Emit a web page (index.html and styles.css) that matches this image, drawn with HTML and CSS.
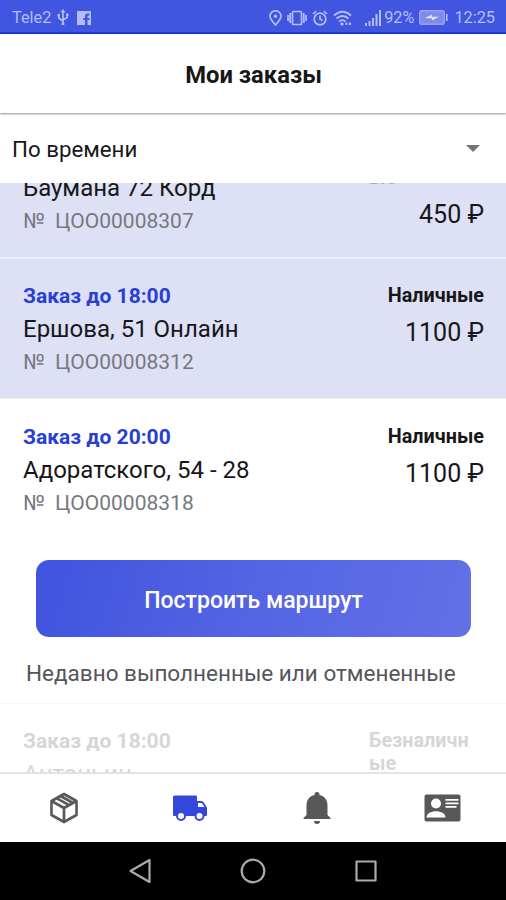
FILE: index.html
```html
<!DOCTYPE html>
<html lang="ru">
  <head>
    <meta charset="UTF-8" />
    <meta name="viewport" content="width=device-width, initial-scale=1.0" />
    <title>Мои заказы</title>
    <link rel="stylesheet" href="styles.css">
  </head>
  <body>
    <div class="status-bar">
      <span class="carrier">Tele2</span>
      <svg class="usb" width="12" height="17" viewBox="0 0 12 17" fill="none" stroke="currentColor" stroke-width="1.6">
        <path d="M6 2v12M1.8 6v3L6 12M10.2 6v2.500L6 11" />
        <path d="M6 0l2.500 3.500h-5zM0.500 5h2.500v2.500H0.500zM9 4.500h2.500V7H9zM4.700 13.500h2.600v2.500H4.700z" fill="currentColor" stroke="none" />
      </svg>
      <svg class="fb" width="14" height="14" viewBox="0 0 14 14">
        <path fill="currentColor" fill-rule="evenodd" d="M0 0h14v14h-3.500V9h2V7h-2V5.500q0-1 1-1h1v-2h-2q-2.500 0-2.500 2.700V7H6.300v2H8v5H0z" />
      </svg>
      <span class="spacer"></span>
      <svg class="pin" width="13" height="16" viewBox="0 0 13 16" fill="none" stroke="currentColor" stroke-width="1.700">
        <path d="M6.500 15C3 11 1 9 1 6.300a5.500 5.500 0 0 1 11 0C12 9 10 11 6.500 15z" />
        <circle cx="6.500" cy="6.300" r="1.700" fill="currentColor" stroke="none" />
      </svg>
      <svg class="vibrate" width="20" height="16" viewBox="0 0 20 16" fill="none" stroke="currentColor" stroke-width="1.700">
        <rect x="5.500" y="1.500" width="9" height="13" rx="1" />
        <path d="M3.200 3v10M1 5v6M16.800 3v10M19 5v6" />
      </svg>
      <svg class="alarm" width="16" height="16" viewBox="0 0 16 16" fill="none" stroke="currentColor" stroke-width="1.700">
        <circle cx="8" cy="9" r="5.800" />
        <path d="M8 5.500V9l2.500 1.500M1 4l3.200-3M15 4l-3.200-3" />
      </svg>
      <svg class="wifi" width="19" height="16" viewBox="0 0 19 16" fill="none" stroke="currentColor" stroke-width="1.800">
        <path d="M1 5.500q8.500-7.500 17 0M3.500 8.500q6-5 12 0M6 11.500q3.500-2.800 6.500 0" />
        <path d="M9 12l2 2-2 2-2-2zM12.500 12.500h2v2.500h-2zM16 12.500h2v2.500h-2z" fill="currentColor" stroke="none" />
      </svg>
      <svg class="signal" width="17" height="16" viewBox="0 0 17 16" fill="currentColor">
        <path d="M0 13h2v3H0zM3.500 11h2v5h-2zM7 8h2v8H7zM10.500 4h2v12h-2zM14 0h2v16h-2z" />
      </svg>
      <span class="percent">92%</span>
      <svg class="battery" width="29" height="15" viewBox="0 0 29 15">
        <rect x="0.700" y="0.700" width="24.600" height="13.600" rx="2" fill="#7f8ceb" stroke="#98a4f1" stroke-width="1.400" />
        <path d="M27 4h1.500v7H27z" fill="#b9c2f8" />
        <path d="M6 8l7-3.500v2.300h7L13 10.500V8.500z" fill="#dde2ff" />
      </svg>
      <span class="clock">12:25</span>
    </div>

    <header class="header">
      <h1>Мои заказы</h1>
    </header>

    <div class="sort">
      <span>По времени</span>
      <span class="caret"></span>
    </div>

    <main class="content">
      <div class="order active">
        <div class="info">
          <div class="time">Заказ до 18:00</div>
          <div class="address">Баумана 72 Корд</div>
          <div class="number">№&nbsp; ЦОО00008307</div>
        </div>
        <div class="payment">
          <div class="method muted">Безналичные</div>
          <div class="price">450 ₽</div>
        </div>
      </div>
      <div class="order active">
        <div class="info">
          <div class="time">Заказ до 18:00</div>
          <div class="address">Ершова, 51 Онлайн</div>
          <div class="number">№&nbsp; ЦОО00008312</div>
        </div>
        <div class="payment">
          <div class="method">Наличные</div>
          <div class="price">1100 ₽</div>
        </div>
      </div>
      <div class="order">
        <div class="info">
          <div class="time">Заказ до 20:00</div>
          <div class="address">Адоратского, 54 - 28</div>
          <div class="number">№&nbsp; ЦОО00008318</div>
        </div>
        <div class="payment">
          <div class="method">Наличные</div>
          <div class="price">1100 ₽</div>
        </div>
      </div>

      <button class="route">Построить маршрут</button>
      <h2 class="recent">Недавно выполненные или отмененные</h2>

      <div class="order done">
        <div class="info">
          <div class="time">Заказ до 18:00</div>
          <div class="address">Антоньин</div>
        </div>
        <div class="payment">
          <div class="method">Безналичные</div>
        </div>
      </div>
    </main>

    <nav class="tabs">
      <a class="tab">
        <svg width="30" height="32" viewBox="0 0 30 32" fill="none" stroke="currentColor" stroke-width="2.600" stroke-linejoin="round">
          <path d="M15 2l12.500 7v14L15 30 2.500 23V9z" />
          <path d="M2.500 9L15 16l12.500-7M15 16v14M7.500 6.200L20 13.200M11.500 4L24 11" />
        </svg>
      </a>
      <a class="tab selected">
        <svg width="36" height="28" viewBox="0 0 36 28">
          <path fill="currentColor" d="M2.500 1.500H24a1 1 0 0 1 1 1V7h4q2 0 3 1.700l2 3.300q1 1 1 2.500V21q0 1-1 1H2q-1 0-1-1V3q0-1.500 1.500-1.500z" />
          <path fill="#fff" d="M26 9h3q1 0 1.600 1l1.900 3H26z" />
          <g fill="#fff" stroke="currentColor" stroke-width="2">
            <circle cx="9" cy="22" r="4" />
            <circle cx="27.500" cy="22" r="4" />
          </g>
        </svg>
      </a>
      <a class="tab">
        <svg width="28" height="34" viewBox="0 0 28 34" fill="currentColor">
          <path d="M14 1a2.500 2.500 0 0 1 2.500 2.500v.500C21.500 5 24.500 9 24.500 14v10l3 3v1H.500v-1l3-3V14c0-5 3-9 8-10v-.500A2.500 2.500 0 0 1 14 1zM11 30h6a3 3 0 0 1-6 0z" />
        </svg>
      </a>
      <a class="tab">
        <svg width="37" height="28" viewBox="0 0 37 28">
          <rect x="0.500" y="0.500" width="36" height="27" rx="2" fill="currentColor" />
          <g fill="#fff">
            <circle cx="12" cy="9.500" r="5" />
            <path d="M2.500 23.500c0-8.500 19-8.500 19 0z" />
            <path d="M21.500 5h13v1.800h-13zM21.500 8.500h13v1.800h-13zM21.500 12h11v1.800h-11z" />
          </g>
        </svg>
      </a>
    </nav>

    <div class="system-nav">
      <svg width="24" height="26" viewBox="0 0 24 26"><path d="M21.500 2v22L2.500 13z" /></svg>
      <svg width="26" height="26" viewBox="0 0 26 26"><circle cx="13" cy="13" r="11.300" /></svg>
      <svg width="24" height="24" viewBox="0 0 24 24"><rect x="2.500" y="2.500" width="19" height="19" /></svg>
    </div>
  </body>
</html>
```

FILE: styles.css
```css
* {
  box-sizing: border-box;
}
body {
  margin: 0;
  height: 900px;
  display: flex;
  flex-direction: column;
  overflow: hidden;
  background: #fff;
  color: #17171a;
  font-family: Roboto, "Noto Sans", sans-serif;
}
svg {
  display: block;
  flex: none;
}

.status-bar {
  display: flex;
  align-items: center;
  flex: none;
  height: 34px;
  padding: 3px 11px 0 12px;
  background: #4056e0;
  border-bottom: 2px solid #1c36d0;
  color: #b3bdf7;
  font-size: 16.3px;
}
.usb {
  margin-left: 6px;
}
.fb {
  margin-left: 8px;
}
.spacer {
  flex: 1;
}
.vibrate {
  margin-left: 5px;
}
.alarm {
  margin-left: 5px;
}
.wifi {
  margin-left: 5px;
}
.signal {
  margin-left: 13px;
}
.percent {
  margin-left: 2px;
}
.battery {
  margin-left: 5px;
}
.clock {
  margin-left: 6px;
}

.header {
  position: relative;
  flex: none;
  height: 79px;
  box-shadow: 0 1px 2px rgba(0, 0, 0, 0.45);
}
.header h1 {
  margin: 0;
  padding: 1px 0 0 1px;
  font-size: 23.8px;
  line-height: 81px;
  font-weight: 700;
  text-align: center;
}
.sort {
  display: flex;
  align-items: center;
  justify-content: space-between;
  flex: none;
  height: 70px;
  padding: 1px 26px 0 12px;
  font-size: 22.3px;
}
.caret {
  border: 7px solid transparent;
  border-top-color: #757575;
  border-bottom: 0;
}

.content {
  flex: 1;
  min-height: 0;
  overflow: hidden;
}
.order {
  display: flex;
  justify-content: space-between;
  height: 141px;
  padding: 20px 22px 0 23px;
  border-bottom: 2px solid #fff;
}
/* list is scrolled under the sort row */
.order:first-child {
  margin-top: -65px;
}
.order.active {
  background: #dee1f6;
  border-bottom-color: #eef0fc;
}
.order.active + .order:not(.active) {
  margin-top: -1px;
  padding-top: 21px;
  height: 142px;
  background: #fff;
}
.info {
  padding-top: 1px;
  line-height: 33px;
}
.time {
  color: #2740d3;
  font-size: 21px;
  font-weight: 700;
}
.address {
  font-size: 24px;
}
.number {
  color: #77787f;
  font-size: 21px;
}
.payment {
  width: 115px;
  padding-top: 5px;
  text-align: right;
}
.method {
  font-size: 19.8px;
  line-height: 23px;
  font-weight: 700;
  word-break: break-all;
}
.price {
  margin-top: 10px;
  font-size: 25px;
  line-height: 32px;
}
.muted,
.done .method {
  color: #d6d6d6;
  text-align: left;
}
.muted {
  color: #a9abb8;
}
.done {
  border-top: 1px solid #f7f7f7;
}
.done .time,
.done .address {
  color: #d6d6d6;
}

.route {
  display: block;
  width: 435px;
  height: 77px;
  margin: 19px 0 0 36px;
  padding: 3px 0 0;
  border: 0;
  border-radius: 13px;
  background: linear-gradient(105deg, #4053e0, #5564e3 50%, #6271e6);
  color: #fff;
  font-family: inherit;
  font-size: 23px;
  font-weight: 500;
}
.recent {
  margin: 20px 0 14px 26px;
  color: #55565a;
  font-size: 22.5px;
  line-height: 32px;
  font-weight: 400;
  white-space: nowrap;
}

.tabs {
  display: flex;
  flex: none;
  height: 70px;
  padding-left: 1px;
  border-top: 2px solid #e3e3e3;
}
.tab {
  display: flex;
  flex: 1;
  align-items: center;
  justify-content: center;
  color: #58585a;
}
.tab.selected {
  color: #3347dc;
}

.system-nav {
  display: flex;
  align-items: center;
  justify-content: center;
  gap: 88px;
  flex: none;
  height: 58px;
  background: #000;
}
.system-nav svg {
  fill: none;
  stroke: #aaa;
  stroke-width: 2.2;
  stroke-linejoin: round;
}
```
